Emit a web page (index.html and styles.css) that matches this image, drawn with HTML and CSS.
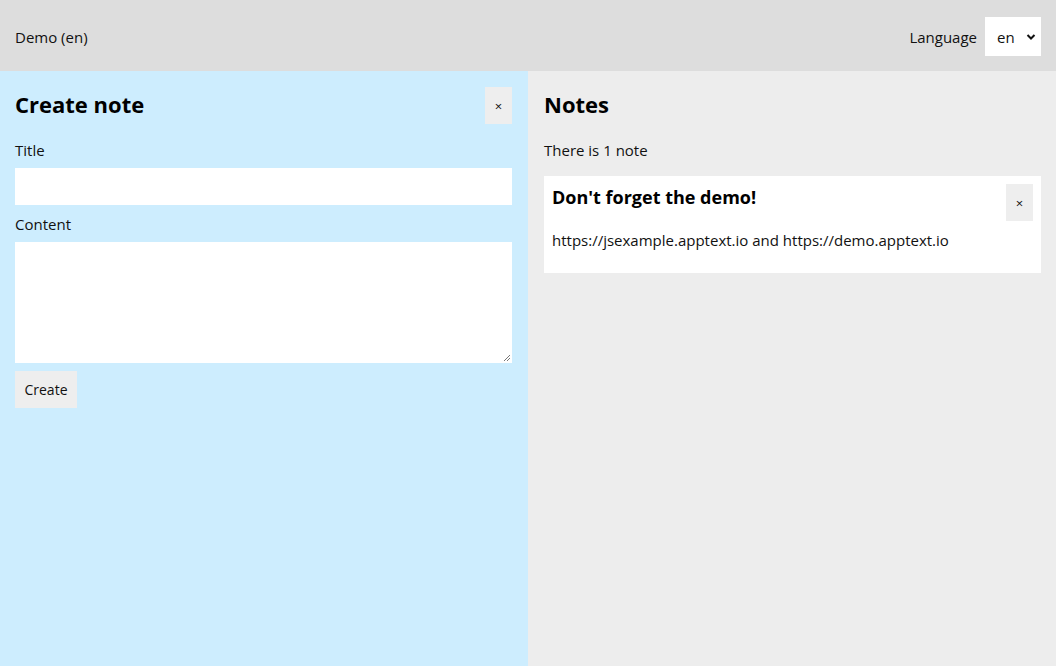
FILE: index.html
```html
<!DOCTYPE html>
<html lang="en">
<head>
<meta charset="utf-8">
<title>Demo</title>
<link rel="stylesheet" href="styles.css">
</head>
<body>
<header class="topbar">
  <div class="brand">Demo (en)</div>
  <div class="lang">
    <label for="lang">Language</label>
    <div class="select-wrap">
      <span class="select-value">en</span>
      <svg class="chev" width="10" height="8" viewBox="0 0 10 8"><path d="M1.5 2 L5 5.5 L8.5 2" fill="none" stroke="#111" stroke-width="2"/></svg>
    </div>
  </div>
</header>
<main class="panels">
  <section class="panel create">
    <div class="panel-head">
      <h2>Create note</h2>
      <button class="close">×</button>
    </div>
    <label class="field-label">Title</label>
    <div class="input"></div>
    <label class="field-label">Content</label>
    <div class="textarea">
      <svg class="grip" width="10" height="10" viewBox="0 0 10 10"><path d="M9 3 L3 9 M9 6 L6 9" stroke="#777" stroke-width="1"/></svg>
    </div>
    <button class="btn">Create</button>
  </section>
  <section class="panel notes">
    <div class="panel-head">
      <h2>Notes</h2>
    </div>
    <p class="count">There is 1 note</p>
    <article class="card">
      <div class="card-head">
        <h3>Don't forget the demo!</h3>
        <button class="close">×</button>
      </div>
      <p class="card-body">https://jsexample.apptext.io and https://demo.apptext.io</p>
    </article>
  </section>
</main>
</body>
</html>
```
FILE: styles.css
```css
* { box-sizing: border-box; }
html, body { margin: 0; padding: 0; }
body {
  font-family: "Open Sans", "Noto Sans", sans-serif;
  font-size: 15px;
  color: #111;
  width: 1056px;
  height: 666px;
  overflow: hidden;
}
.topbar {
  height: 71px;
  background: #dddddd;
  display: flex;
  align-items: center;
  justify-content: space-between;
  padding: 2px 15px 0;
}
.lang { display: flex; align-items: center; gap: 8px; }
.select-wrap {
  width: 56px;
  height: 39px;
  background: #fff;
  display: flex;
  align-items: center;
  justify-content: space-between;
  padding: 0 5px 0 12px;
}
.chev { margin-top: 1px; }
.panels {
  display: grid;
  grid-template-columns: 528px 528px;
  height: 595px;
}
.panel { padding: 16px 16px 16px 15px; }
.create { background: #cdedfe; }
.notes { background: #ededed; padding-left: 16px; padding-right: 15px; }
.panel-head {
  display: flex;
  justify-content: space-between;
  align-items: flex-start;
  height: 53px;
}
h2 {
  margin: 3px 0 0;
  font-size: 22px;
  font-weight: 700;
  line-height: 1.3;
  color: #000;
}
.close {
  border: none;
  background: #eeeeee;
  width: 27px;
  height: 37px;
  font-family: inherit;
  font-size: 13px;
  color: #111;
  padding: 0;
}
.field-label { display: block; height: 28px; }
.field-label + .input { margin-top: 0; }
.input { height: 37px; background: #fff; margin-bottom: 9px; }
.textarea { height: 121px; background: #fff; margin-bottom: 8px; position: relative; }
.grip { position: absolute; right: 1px; bottom: 1px; }
.btn {
  border: none;
  background: #eeeeee;
  width: 62px;
  height: 37px;
  font-family: inherit;
  font-size: 14px;
  color: #111;
  padding: 0;
}
.count { margin: 0; height: 36px; }
.card {
  background: #fff;
  padding: 8px;
  height: 97px;
}
.card-head { display: flex; justify-content: space-between; align-items: flex-start; height: 46px; }
h3 { margin: 1px 0 0; font-size: 18px; font-weight: 700; color: #000; }
.card-body { margin: 0; }
```
